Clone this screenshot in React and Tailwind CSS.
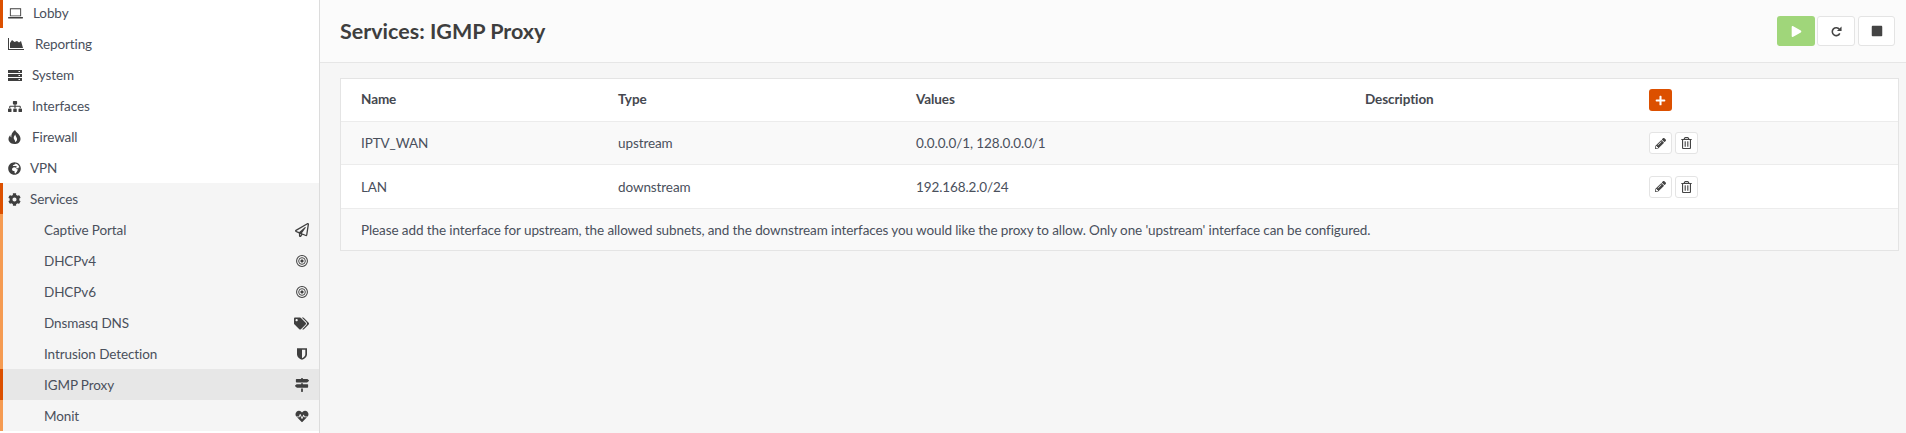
import { FaSitemap, FaGlobeAfrica, FaCog, FaRegPaperPlane, FaTags, FaMapSigns, FaHeartbeat, FaPlay, FaStop, FaPlus, FaPencilAlt, FaRegTrashAlt } from 'react-icons/fa';

const LaptopIcon = ({ className }) => (
  <svg viewBox="0 0 16 11" className={className} fill="currentColor">
    <path d="M2 0h12v8.5H2zM3 1v6.5h10V1z" fillRule="evenodd" />
    <rect x="0" y="9.2" width="16" height="1.6" rx="0.5" />
  </svg>
);

const AreaIcon = ({ className }) => (
  <svg viewBox="0 0 16 12" className={className} fill="currentColor">
    <path d="M0 0h1v11h15v1H0z" />
    <path d="M2 10V5l2-3 2.5 2L9 3l2 1.5L13 3l2 7z" />
  </svg>
);

const ServerIcon = ({ className }) => (
  <svg viewBox="0 0 14 11" className={className} fill="currentColor" fillRule="evenodd">
    <path d="M0 0h14v3H0zM10.5 1v1H12V1z" />
    <path d="M0 4h14v3H0zM10.5 5v1H12V5z" />
    <path d="M0 8h14v3H0zM10.5 9v1H12V9z" />
  </svg>
);

const FlameIcon = ({ className }) => (
  <svg viewBox="0 0 13 14" className={className} fill="currentColor" fillRule="evenodd">
    <path d="M7 0c.5 2 3 3 4.500 5.500C13 8 13 11 10.500 13c-1 .7-2.500 1-4 1-2.500 0-5-1-5.800-3.500C0 8.500 1 6.500 2.300 5c0 1 .3 2 1 2.500C3 5 4 2 7 0zM7.300 4.500C6 6 5.300 7.500 6 9c.5 1 1.500 1.700 1 3.300 1.500-.8 2.300-2 2-3.500-.2-1.500-1.500-2.500-1.700-4.300z" />
  </svg>
);

const TargetIcon = ({ className }) => (
  <svg viewBox="0 0 14 14" className={className} fill="none" stroke="currentColor">
    <circle cx="7" cy="7" r="6.300" strokeWidth="1.200" />
    <circle cx="7" cy="7" r="3.900" strokeWidth="1.100" />
    <circle cx="7" cy="7" r="1.600" fill="currentColor" strokeWidth="0.600" />
  </svg>
);

const ShieldIcon = ({ className }) => (
  <svg viewBox="0 0 12 14" className={className} fill="currentColor" fillRule="evenodd">
    <path d="M0 0h12v7.500c0 3-3 5.300-6 6.500-3-1.200-6-3.500-6-6.500zM6 2V12c2.300-1 4-2.700 4-4.700V2z" />
  </svg>
);

const RepeatIcon = ({ className }) => (
  <svg viewBox="0 0 12 12" className={className} fill="none" stroke="currentColor">
    <path d="M9.600 8a4.300 4.300 0 1 1-.4-4.300" strokeWidth="1.700" />
    <path d="M11.500 0.500v5h-5z" fill="currentColor" stroke="none" />
  </svg>
);

const topItems = [
  { label: 'Lobby', icon: LaptopIcon, gap: 'w-[25px]', size: 'w-[15px] h-[11px]', bar: true },
  { label: 'Reporting', icon: AreaIcon, gap: 'w-[27px]', size: 'w-[16px] h-[12px]' },
  { label: 'System', icon: ServerIcon, gap: 'w-[24px]', size: 'w-[14px] h-[11px]' },
  { label: 'Interfaces', icon: FaSitemap, gap: 'w-[24px]', size: 'w-[14px] h-[13px]' },
  { label: 'Firewall', icon: FlameIcon, gap: 'w-[24px]', size: 'w-[13px] h-[14px]' },
  { label: 'VPN', icon: FaGlobeAfrica, gap: 'w-[22px]', size: 'w-[13px] h-[13px]' },
];

const subItems = [
  { label: 'Captive Portal', icon: FaRegPaperPlane, size: 'w-[14px] h-[14px]' },
  { label: 'DHCPv4', icon: TargetIcon, size: 'w-[12px] h-[12px] mr-[1px]' },
  { label: 'DHCPv6', icon: TargetIcon, size: 'w-[12px] h-[12px] mr-[1px]' },
  { label: 'Dnsmasq DNS', icon: FaTags, size: 'w-[15px] h-[13px]' },
  { label: 'Intrusion Detection', icon: ShieldIcon, size: 'w-[10px] h-[12px] mr-[2px]' },
  { label: 'IGMP Proxy', icon: FaMapSigns, size: 'w-[14px] h-[14px]', active: true },
  { label: 'Monit', icon: FaHeartbeat, size: 'w-[14px] h-[13px]' },
];

const rows = [
  { name: 'IPTV_WAN', type: 'upstream', values: '0.0.0.0/1, 128.0.0.0/1', h: 'h-[43px]', bg: 'bg-[#f9f9f9]' },
  { name: 'LAN', type: 'downstream', values: '192.168.2.0/24', h: 'h-[44px]', bg: 'bg-white' },
];

const cols = 'grid grid-cols-[257px_298px_449px_284px_1fr] items-center px-5';

const Sidebar = () => (
  <aside className="w-[320px] shrink-0 h-full overflow-hidden bg-white border-r border-[#dcdcdc] text-[13.5px] tracking-[-0.1px] text-[#4a505c]">
    <div className="-mt-[3px]">
      {topItems.map(({ label, icon: Icon, gap, size, bar }) => (
        <div key={label} className={`h-[31px] flex items-center pl-[5px] pt-[1px] border-l-[3px] ${bar ? 'border-[#dc5000]' : 'border-transparent'}`}>
          <div className={`${gap} shrink-0`}>
            <Icon className={`${size} text-[#3f3f3f]`} />
          </div>
          <span>{label}</span>
        </div>
      ))}
    </div>
    <div className="h-[31px] flex items-center pl-[5px] pt-[1px] border-l-[3px] border-[#dc5000] bg-[#f5f5f5]">
      <div className="w-[22px] shrink-0">
        <FaCog className="w-[13px] h-[13px] text-[#3f3f3f]" />
      </div>
      <span>Services</span>
    </div>
    {subItems.map(({ label, icon: Icon, size, active }) => (
      <div
        key={label}
        className={`h-[31px] flex items-center justify-between pl-[41px] pr-[10px] pt-[1px] border-l-[3px] ${active ? 'bg-[#e7e7e7] border-[#dc5000]' : 'bg-[#f5f5f5] border-[#f59b52]'}`}
      >
        <span>{label}</span>
        <Icon className={`${size} text-[#3f3f3f]`} />
      </div>
    ))}
  </aside>
);

const IconButton = ({ children }) => (
  <button className="w-[23px] h-[22px] flex items-center justify-center bg-white border border-[#e4e4e4] rounded-[3px] text-[#444]">
    {children}
  </button>
);

const Header = () => (
  <header className="h-[63px] flex items-center justify-between pl-5 pr-[11px] bg-[#fbfbfb] border-b border-[#e6e6e6]">
    <h1 className="text-[21.500px] font-bold text-[#3e3e3e]">Services: IGMP Proxy</h1>
    <div className="flex gap-[2px]">
      <button className="w-[38px] h-[30px] flex items-center justify-center bg-[#a0d67a] rounded-[3px] text-white">
        <FaPlay className="w-[11px] h-[11px]" />
      </button>
      <button className="w-[38px] h-[30px] flex items-center justify-center bg-white border border-[#e4e4e4] rounded-[3px] text-[#444]">
        <RepeatIcon className="w-[11px] h-[11px]" />
      </button>
      <button className="w-[37px] h-[30px] ml-[1px] flex items-center justify-center bg-white border border-[#e4e4e4] rounded-[3px] text-[#444]">
        <FaStop className="w-[12px] h-[12px]" />
      </button>
    </div>
  </header>
);

const ServiceTable = () => (
  <section className="mt-[15px] mr-[7px] ml-5 bg-white border border-[#e4e4e4] text-[13.5px] tracking-[-0.1px] text-[#4a505c]">
    <div className={`${cols} h-[43px] border-b border-[#ececec] font-bold text-[#45484f]`}>
      <span className="pb-[1px]">Name</span>
      <span className="pb-[1px]">Type</span>
      <span className="pb-[1px]">Values</span>
      <span className="pb-[1px]">Description</span>
      <div>
        <button className="w-[23px] h-[22px] flex items-center justify-center bg-[#dc5000] rounded-[3px] text-white">
          <FaPlus className="w-[11px] h-[11px]" />
        </button>
      </div>
    </div>
    {rows.map(row => (
      <div key={row.name} className={`${cols} ${row.h} ${row.bg} border-b border-[#ececec]`}>
        <span className="pt-[1px]">{row.name}</span>
        <span className="pt-[1px]">{row.type}</span>
        <span className="pt-[1px]">{row.values}</span>
        <span></span>
        <div className="flex gap-[3px]">
          <IconButton><FaPencilAlt className="w-[11px] h-[11px]" /></IconButton>
          <IconButton><FaRegTrashAlt className="w-[11px] h-[12px]" /></IconButton>
        </div>
      </div>
    ))}
    <div className="h-[41px] flex items-center px-5 pt-[1px] bg-[#f9f9f9]">
      Please add the interface for upstream, the allowed subnets, and the downstream interfaces you would like the proxy to allow. Only one 'upstream' interface can be configured.
    </div>
  </section>
);

export default function App() {
  return (
    <div className="flex h-[433px] overflow-hidden font-['Lato',sans-serif] bg-[#f6f6f6]">
      <Sidebar />
      <main className="flex-1 min-w-0">
        <Header />
        <ServiceTable />
      </main>
    </div>
  );
}
